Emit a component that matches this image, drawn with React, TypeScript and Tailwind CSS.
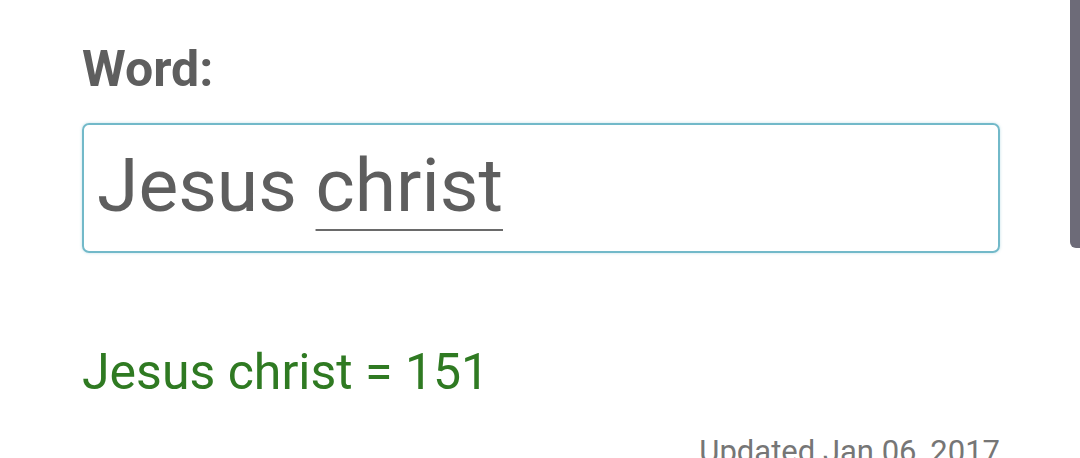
import React from "react";

export default function App() {
  return (
    <div
      className="relative h-[458px] w-[1080px] overflow-hidden bg-white"
      style={{ fontFamily: "Roboto, 'Noto Sans', sans-serif" }}
    >
      <div className="pl-[82px] w-[1000px]">
        <div className="pt-[44px] text-[50px] font-bold leading-none text-[#5e5e5e]">
          Word:
        </div>
        <div className="mt-[29px] h-[130px] rounded-[7px] border-[2.5px] border-[#72b9c9] pl-[13px] pt-[23px] shadow-[0_0_3px_rgba(114,185,201,0.45)]">
          <div className="text-[75px] leading-none text-[#5e5e5e] whitespace-nowrap">
            Jesus{" "}
            <span className="underline decoration-[2px] decoration-[#6a6a6a] underline-offset-[18px]">
              christ
            </span>
          </div>
        </div>
        <div className="mt-[94px] text-[50px] leading-none text-[#2f7a22] whitespace-nowrap">
          Jesus christ = 151
        </div>
        <div className="mt-[39px] text-right text-[31px] leading-none text-[#767676] whitespace-nowrap">
          Updated Jan 06, 2017
        </div>
      </div>
      <div className="absolute right-0 top-0 h-[248px] w-[10px] rounded-bl-[6px] bg-[#6d6b78]" />
    </div>
  );
}
